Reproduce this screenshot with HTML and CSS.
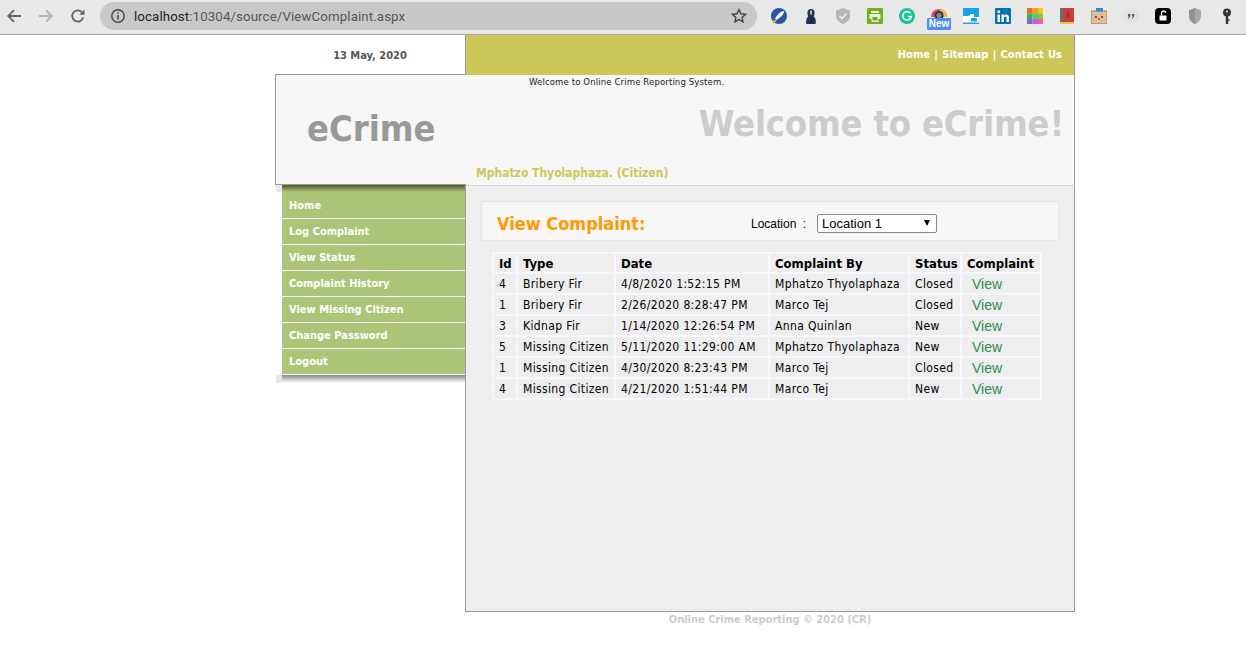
FILE: index.html
```html
<!DOCTYPE html>
<html lang="en">
<head>
<meta charset="utf-8">
<title>View Complaint</title>
<link rel="stylesheet" href="styles.css">
</head>
<body>
<div class="chrome">
  <div class="nav">
    <svg class="nav-icon" viewBox="0 0 16 16"><path d="M15 8H2.500M8 2.200 2.200 8 8 13.800" fill="none" stroke="#5f6368" stroke-width="1.800"/></svg>
    <svg class="nav-icon" viewBox="0 0 16 16"><path d="M1 8h12.500M8 2.200 13.800 8 8 13.800" fill="none" stroke="#b4b4b4" stroke-width="1.800"/></svg>
    <svg class="nav-icon" viewBox="0 0 16 16"><path d="M13.200 9.500A5.600 5.600 0 1 1 12 4.200" fill="none" stroke="#5f6368" stroke-width="1.800"/><path d="M14.500 1.500v5.300H9.200z" fill="#5f6368"/></svg>
  </div>
  <div class="omnibox">
    <svg class="info" viewBox="0 0 16 16"><circle cx="8" cy="8" r="6.200" fill="none" stroke="#444" stroke-width="1.400"/><path d="M8 7v4.500M8 4.200v1.600" stroke="#444" stroke-width="1.500"/></svg>
    <span class="url"><span class="host">localhost</span>:10304/source/ViewComplaint.aspx</span>
    <svg class="star" viewBox="0 0 16 16"><path d="m8 1.600 1.900 4.200 4.600.5-3.400 3.100.9 4.500-4-2.300-4 2.300.9-4.500-3.400-3.100 4.600-.5z" fill="none" stroke="#444" stroke-width="1.400"/></svg>
  </div>
  <div class="exts">
    <span class="ext"><svg viewBox="0 0 16 16"><circle cx="8" cy="8" r="8" fill="#2a55a5"/><path d="M4 10.500 7 6.500c1.500-2 4-3.500 6-3.500 0 2-1.500 4.500-3.500 6L5.500 12z" fill="#fff"/><path d="M2 14.500 5 12" stroke="#f0b429" stroke-width="2"/></svg></span>
    <span class="ext"><svg viewBox="0 0 16 16"><path d="M3.500 16c-1-4 .5-6.500 1.800-7.500C4.500 7 4.500 5.500 4.500 4.500a3.500 3.500 0 0 1 7 0c0 1 0 2.500-.8 4 1.300 1 2.800 3.500 1.800 7.500z" fill="#1f2f55"/><path d="M8 2.500v4" stroke="#fff" stroke-width="1.400"/></svg></span>
    <span class="ext"><svg viewBox="0 0 16 16"><path d="M8 0 15 2.500V8c0 4-3.500 6.500-7 8-3.500-1.500-7-4-7-8V2.500z" fill="#b5b5b5"/><path d="m4.500 8 2.500 2.500L11.500 5.500" fill="none" stroke="#eee" stroke-width="1.600"/></svg></span>
    <span class="ext"><svg viewBox="0 0 16 16"><rect width="16" height="16" rx="1" fill="#75ac26"/><path d="M4 3h8v2H4zM2.500 6h11v5h-2v3h-7v-3h-2z" fill="#e8f2d4"/><rect x="5.500" y="9" width="5" height="3.500" fill="#75ac26"/></svg></span>
    <span class="ext"><svg viewBox="0 0 16 16"><circle cx="8" cy="8" r="8" fill="#15c39a"/><path d="M11.500 5.300A4.300 4.300 0 1 0 12.300 8.500H8.800" fill="none" stroke="#fff" stroke-width="1.700"/></svg></span>
    <span class="ext ext-new"><svg viewBox="0 0 16 16"><path d="M0 9a8 8 0 0 1 16 0z" fill="#d6457a"/><path d="M8 1a8 8 0 0 1 8 8h-3z" fill="#f2c037"/><circle cx="8" cy="7.500" r="4.500" fill="#333"/><circle cx="8" cy="7.500" r="2.500" fill="#889"/></svg><span class="new-badge">New</span></span>
    <span class="ext"><svg viewBox="0 0 16 16"><rect width="16" height="16" fill="#12a5e8"/><path d="M0 8h6l1.500-2H11v3h5v5.500H0z" fill="#fff"/><path d="M8 10h6v3.500H8z" fill="#12a5e8"/></svg></span>
    <span class="ext"><svg viewBox="0 0 16 16"><rect width="16" height="16" rx="1" fill="#0274b3"/><path d="M2.500 6.500h2.500V14H2.500zM2.500 2.500h2.500V5H2.500zM6.500 6.500H9v1.200c1.500-2 5-1.500 5 1.800V14h-2.500V10c0-2-2.500-2-2.500 0v4H6.500z" fill="#fff"/></svg></span>
    <span class="ext"><svg viewBox="0 0 16 16"><rect width="5.500" height="5.500" fill="#f2641e"/><rect x="5.500" width="5.500" height="5.500" fill="#f79a1d"/><rect x="11" width="5" height="5.500" fill="#fcc419"/><rect y="5.500" width="5.500" height="5.500" fill="#37b24d"/><rect x="5.500" y="5.500" width="5.500" height="5.500" fill="#51cf66"/><rect x="11" y="5.500" width="5" height="5.500" fill="#74d13d"/><rect y="11" width="5.500" height="5" fill="#8f5ce8"/><rect x="5.500" y="11" width="5.500" height="5" fill="#c85ce8"/><rect x="11" y="11" width="5" height="5" fill="#f25ca8"/></svg></span>
    <span class="ext"><svg viewBox="0 0 16 16"><rect x="1" width="14" height="15" fill="#c8403a"/><rect x="1" width="3" height="15" fill="#6d6d6d"/><path d="M1 14h14v2H1z" fill="#e8c64a"/><path d="m7 10 2-6 2 6M8 8h2" fill="none" stroke="#a52d28" stroke-width="1"/></svg></span>
    <span class="ext"><svg viewBox="0 0 16 16"><rect y="3" width="16" height="13" fill="#e4bd92" stroke="#777" stroke-width=".8"/><rect x="5" width="7" height="3.500" fill="#2b8fd8"/><circle cx="5" cy="9" r="1" fill="#333"/><circle cx="11" cy="9" r="1" fill="#333"/><path d="M7 11h2" stroke="#333"/></svg></span>
    <span class="ext"><svg viewBox="0 0 16 16"><circle cx="8" cy="8" r="8" fill="#e2e2e2"/><path d="M5 6h2.200v2L6 10.500H5l.8-2.300H5zM9 6h2.200v2L10 10.500H9l.8-2.300H9z" fill="#555"/></svg></span>
    <span class="ext"><svg viewBox="0 0 16 16"><rect width="16" height="16" rx="4" fill="#000"/><rect x="4.500" y="7.500" width="7" height="5" fill="#fff"/><path d="M6.500 7.500V5a2 2 0 0 1 4 0" fill="none" stroke="#fff" stroke-width="1.300"/></svg></span>
    <span class="ext"><svg viewBox="0 0 16 16"><path d="M8 0 14 2.500V8c0 4-3 6.500-6 8-3-1.500-6-4-6-8V2.500z" fill="#a8a8a8"/><path d="M8 0 2 2.500V8c0 4 3 6.500 6 8z" fill="#909090"/></svg></span>
    <span class="ext"><svg viewBox="0 0 16 16"><circle cx="8" cy="4.500" r="4" fill="#333"/><circle cx="8" cy="3.500" r="1" fill="#e8e8e8"/><path d="M8 8v8" stroke="#333" stroke-width="2.400"/><path d="M8 12h2.500" stroke="#333" stroke-width="1.500"/></svg></span>
  </div>
</div>

<div class="page">
  <div class="topbar">
    <div class="date">13 May, 2020</div>
    <div class="toplinks"><a>Home</a> | <a>Sitemap</a> | <a>Contact Us</a></div>
  </div>
  <header class="masthead">
    <div class="brand">eCrime</div>
    <div class="mast-right">
      <div class="tagline">Welcome to Online Crime Reporting System.</div>
      <div class="welcome">Welcome to eCrime!</div>
      <div class="user">Mphatzo Thyolaphaza. (Citizen)</div>
    </div>
  </header>
  <div class="body-row">
    <aside class="side">
      <nav class="menu">
        <a>Home</a>
        <a>Log Complaint</a>
        <a>View Status</a>
        <a>Complaint History</a>
        <a>View Missing Citizen</a>
        <a>Change Password</a>
        <a>Logout</a>
      </nav>
      <div class="menu-foot"></div>
    </aside>
    <main class="content">
      <div class="panel">
        <h1 class="panel-title">View Complaint:</h1>
        <label class="loc-label">Location :</label>
        <div class="select"><span>Location 1</span><i class="caret"></i></div>
      </div>
      <table class="grid">
        <colgroup><col class="c1"><col class="c2"><col class="c3"><col class="c4"><col class="c5"><col class="c6"></colgroup>
        <thead><tr><th>Id</th><th>Type</th><th>Date</th><th>Complaint By</th><th>Status</th><th>Complaint</th></tr></thead>
        <tbody>
          <tr><td>4</td><td>Bribery Fir</td><td>4/8/2020 1:52:15 PM</td><td>Mphatzo Thyolaphaza</td><td>Closed</td><td class="lk"><a>View</a></td></tr>
          <tr><td>1</td><td>Bribery Fir</td><td>2/26/2020 8:28:47 PM</td><td>Marco Tej</td><td>Closed</td><td class="lk"><a>View</a></td></tr>
          <tr><td>3</td><td>Kidnap Fir</td><td>1/14/2020 12:26:54 PM</td><td>Anna Quinlan</td><td>New</td><td class="lk"><a>View</a></td></tr>
          <tr><td>5</td><td>Missing Citizen</td><td>5/11/2020 11:29:00 AM</td><td>Mphatzo Thyolaphaza</td><td>New</td><td class="lk"><a>View</a></td></tr>
          <tr><td>1</td><td>Missing Citizen</td><td>4/30/2020 8:23:43 PM</td><td>Marco Tej</td><td>Closed</td><td class="lk"><a>View</a></td></tr>
          <tr><td>4</td><td>Missing Citizen</td><td>4/21/2020 1:51:44 PM</td><td>Marco Tej</td><td>New</td><td class="lk"><a>View</a></td></tr>
        </tbody>
      </table>
    </main>
  </div>
  <footer class="foot">Online Crime Reporting © 2020 (CR)</footer>
</div>
</body>
</html>
```

FILE: styles.css
```css
* { box-sizing: border-box; }
html, body { margin: 0; padding: 0; background: #fff; }
body { font-family: "DejaVu Sans", "Liberation Sans", sans-serif; font-stretch: condensed; overflow: hidden; height: 647px; }

.chrome { height: 35px; background: #e8e8e8; border-bottom: 1px solid #a6a6a6; display: flex; align-items: flex-start; }
.nav { display: flex; width: 100px; padding: 8px 0 0 6px; gap: 16px; }
.nav-icon { width: 16px; height: 16px; display: block; }
.omnibox { width: 657px; height: 28px; margin-top: 2px; background: #c8c8c8; border-radius: 14px; display: flex; align-items: center; padding: 0 10px; }
.info { width: 16px; height: 16px; flex: none; }
.url { margin-left: 8px; font-size: 13.300px; color: #555; flex: 1; font-family: "Roboto", sans-serif; font-stretch: normal; letter-spacing: .1px; }
.host { color: #222; }
.star { width: 16px; height: 16px; flex: none; }
.exts { display: flex; padding: 8px 0 0 6px; }
.ext { width: 32px; height: 16px; display: flex; justify-content: center; position: relative; }
.ext svg { width: 16px; height: 16px; display: block; }
.new-badge { position: absolute; top: 10px; left: 4px; width: 24px; height: 12px; background: #4d8df0; color: #fff; border-radius: 1px; font: bold 10px/12px "Liberation Sans", sans-serif; text-align: center; }

.page { width: 800px; margin-left: 275px; }
.topbar { display: flex; height: 40px; }
.date { width: 191px; padding-top: 14px; text-align: center; font-size: 11px; font-weight: 700; color: #555; border-right: 1px solid #999; }
.toplinks { flex: 1; background: #cdc75a; color: #fff; font-size: 11px; font-weight: 700; text-align: right; padding: 13px 12px 0 0; border-right: 1px solid #999; word-spacing: .9px; }

.masthead { display: flex; height: 110px; background: #f7f7f7; border-right: 1px solid #999; border-left: 1px solid #999; position: relative; }
.masthead::before { content: ""; position: absolute; left: -1px; top: -1px; width: 191px; height: 1px; background: #999; }
.masthead::after { content: ""; position: absolute; left: -1px; bottom: 0; width: 191px; height: 1px; background: #999; }
.brand { width: 189px; padding: 32px 0 0 31px; font-size: 36px; font-weight: 700; color: #999; line-height: 44px; }
.mast-right { flex: 1; display: flex; flex-direction: column; padding: 0 10px 0 11px; }
.tagline { font-size: 9.500px; letter-spacing: .12px; color: #222; height: 14px; line-height: 14px; padding-left: 53px; }
.welcome { font-size: 36px; letter-spacing: -.17px; font-weight: 700; color: #ccc; text-align: right; line-height: 44px; margin-top: 13px; }
.user { font-size: 12px; font-weight: 700; color: #cdc75a; margin-top: 19px; line-height: 16px; }

.body-row { display: flex; height: 427px; }
.side { width: 190px; position: relative; }
.side::before { content: ""; position: absolute; left: 1px; top: 0; width: 6px; height: 7px; background: #e6e6e6; }
.menu { margin-left: 7px; width: 183px; background: #adc578; padding-top: 8px; position: relative; }
.menu::before { content: ""; position: absolute; left: 0; top: 0; right: 0; height: 7px; background: linear-gradient(#4f5430, #adc578); }
.menu a { display: block; height: 26px; line-height: 25px; padding-left: 7px; color: #fff; font-size: 11px; font-weight: 700; border-bottom: 1px solid #fff; }
.menu-foot { height: 8px; margin-left: 1px; background: linear-gradient(to right, #e6e6e6 6px, transparent 6px), linear-gradient(#888, #fff); }

.content { flex: 1; background: #eee; border: 1px solid #999; border-top: 1px dotted #bbb; padding: 15px 15px 0; }
.panel { height: 40px; background: #f7f7f7; border: 1px solid #e6e6e6; display: flex; align-items: center; padding: 2px 0 0 15px; }
.panel-title { margin: 2px 0 0; width: 254px; font-size: 18px; font-weight: 700; color: #f90; }
.loc-label { font: 12px "Liberation Sans", sans-serif; color: #000; width: 66px; word-spacing: 3px; margin-top: 4px; }
.select { width: 120px; height: 19px; margin-top: 2px; background: #fff; border: 1px solid #888; border-radius: 2px; display: flex; align-items: center; justify-content: space-between; padding: 0 6px 0 4px; font: 13px "Liberation Sans", sans-serif; color: #000; }
.caret { width: 0; height: 0; border: 3.500px solid transparent; border-top: 6px solid #000; border-bottom: 0; }

.grid { margin: 11px 0 0 11px; width: 550px; table-layout: fixed; border-collapse: separate; border-spacing: 2px; background: #f7f7ff; font-size: 12px; color: #000; }
.c1 { width: 22px; } .c2 { width: 96px; } .c3 { width: 152px; } .c4 { width: 138px; } .c5 { width: 50px; } .c6 { width: 78px; }
.grid th, .grid td { background: #eee; padding: 2px 0 0 5px; height: 19px; line-height: 17px; text-align: left; white-space: nowrap; overflow: hidden; letter-spacing: .36px; }
.grid th { height: 18px; padding-top: 1px; line-height: 17px; font-size: 13px; font-weight: 700; letter-spacing: 0; }
.grid .lk { padding-top: 0; font: 14px "Liberation Sans", sans-serif; letter-spacing: 0; }
.lk a { color: #2e8b57; margin-left: 5px; }

.foot { margin-left: 190px; padding-top: 1px; text-align: center; font-size: 11px; font-weight: 700; color: #ccc; }
```
